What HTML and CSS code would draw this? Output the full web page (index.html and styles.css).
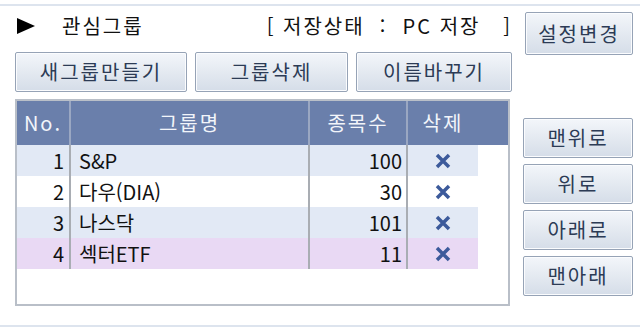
FILE: index.html
```html
<!DOCTYPE html>
<html lang="ko">

<head>
    <meta charset="UTF-8">
    <title>관심그룹</title>
    <link rel="stylesheet" href="styles.css">
</head>

<body>
    <div class="line"></div>
    <div class="panel">
        <div class="left">
            <div class="title-row">
                <svg class="arrow" width="18" height="16" viewBox="0 0 18 16">
                    <polygon points="0,0 18,8 0,16" fill="#000" />
                </svg>
                <span class="title">관심그룹</span>
                <span class="status">[ 저장상태  :  PC 저장   ]</span>
            </div>
            <div class="btn-row">
                <button class="btn w-new">새그룹만들기</button>
                <button class="btn w-del">그룹삭제</button>
                <button class="btn w-ren">이름바꾸기</button>
            </div>
            <div class="grid">
                <div class="row head">
                    <div class="cell c-no">No.</div>
                    <div class="cell c-name">그룹명</div>
                    <div class="cell c-cnt">종목수</div>
                    <div class="cell c-x">삭제</div>
                    <div class="cell c-fill"></div>
                </div>
                <div class="row blue">
                    <div class="cell c-no">1</div>
                    <div class="cell c-name">S&amp;P</div>
                    <div class="cell c-cnt">100</div>
                    <div class="cell c-x"><svg class="xicon" width="16" height="16" viewBox="0 0 16 16"><path d="M2 2 L14 14 M14 2 L2 14" /></svg></div>
                    <div class="cell c-fill"></div>
                </div>
                <div class="row">
                    <div class="cell c-no">2</div>
                    <div class="cell c-name">다우(DIA)</div>
                    <div class="cell c-cnt">30</div>
                    <div class="cell c-x"><svg class="xicon" width="16" height="16" viewBox="0 0 16 16"><path d="M2 2 L14 14 M14 2 L2 14" /></svg></div>
                    <div class="cell c-fill"></div>
                </div>
                <div class="row blue">
                    <div class="cell c-no">3</div>
                    <div class="cell c-name">나스닥</div>
                    <div class="cell c-cnt">101</div>
                    <div class="cell c-x"><svg class="xicon" width="16" height="16" viewBox="0 0 16 16"><path d="M2 2 L14 14 M14 2 L2 14" /></svg></div>
                    <div class="cell c-fill"></div>
                </div>
                <div class="row purple">
                    <div class="cell c-no">4</div>
                    <div class="cell c-name">섹터ETF</div>
                    <div class="cell c-cnt">11</div>
                    <div class="cell c-x"><svg class="xicon" width="16" height="16" viewBox="0 0 16 16"><path d="M2 2 L14 14 M14 2 L2 14" /></svg></div>
                    <div class="cell c-fill"></div>
                </div>
            </div>
        </div>
        <div class="right">
            <button class="btn b-set">설정변경</button>
            <div class="move">
                <button class="btn b-move">맨위로</button>
                <button class="btn b-move">위로</button>
                <button class="btn b-move">아래로</button>
                <button class="btn b-move">맨아래</button>
            </div>
        </div>
    </div>
    <div class="line"></div>
</body>

</html>
```

FILE: styles.css
```css
* {
    margin: 0;
    padding: 0;
    box-sizing: border-box;
}

body {
    width: 640px;
    height: 328px;
    background: #fff;
    font-family: "Noto Sans CJK KR", sans-serif;
    font-size: 20px;
    color: #111;
    overflow: hidden;
}

.line {
    height: 2px;
    margin-top: 4px;
    background: #dde4ee;
}

.panel {
    display: grid;
    grid-template-columns: 497px 110px;
    column-gap: 11px;
    padding: 6px 0 0 15px;
    height: 315px;
}

.left {
    display: flex;
    flex-direction: column;
}

.title-row {
    height: 28px;
    display: flex;
    align-items: center;
    margin-bottom: 12px;
}

.arrow {
    margin-left: 2px;
}

.title {
    margin-left: 27px;
    letter-spacing: 2px;
    line-height: 1;
}

.status {
    margin-left: auto;
    white-space: pre;
    letter-spacing: 2px;
    line-height: 1;
}

.btn-row {
    display: flex;
    gap: 8px;
    height: 40px;
}

.btn {
    font-family: "Noto Sans CJK KR", sans-serif;
    font-size: 20px;
    letter-spacing: 2px;
    color: #2c3b55;
    border: 1px solid #96a3b6;
    border-radius: 2px;
    background: linear-gradient(#f3f6fa, #d5dde8);
    box-shadow: inset 0 0 0 1px #fbfcfe;
    line-height: 1;
}

.w-new {
    width: 172px;
}

.w-del {
    width: 153px;
}

.w-ren {
    width: 156px;
}

.grid {
    margin-top: 7px;
    width: 495px;
    height: 207px;
    border: 2px solid #b9bfc8;
    background: #fff;
}

.row {
    display: grid;
    grid-template-columns: 54px 239px 98px 70px 30px;
    height: 31px;
}

.cell {
    display: flex;
    align-items: center;
    line-height: 1;
}

.row .c-no,
.row .c-name,
.row .c-cnt {
    border-right: 2px solid #a9adb3;
}

.c-no {
    justify-content: flex-end;
    padding-right: 5px;
}

.c-name {
    padding-left: 8px;
}

.c-cnt {
    justify-content: flex-end;
    padding-right: 4px;
}

.c-x {
    justify-content: center;
}

.blue .cell {
    background: #e2e9f5;
}

.purple .cell {
    background: #e9d9f4;
}

.row .c-fill {
    background: #fff;
}

.head {
    height: 44px;
}

.head .cell {
    background: #6a7fab;
    color: #f2f5fa;
    justify-content: center;
    padding: 0;
    letter-spacing: 2px;
}

.head .c-no,
.head .c-name,
.head .c-cnt {
    border-right-color: #9aa7c2;
}

.head .c-fill {
    background: #6a7fab;
}

.xicon path {
    stroke: #3c5a9b;
    stroke-width: 3.5;
    fill: none;
}

.right {
    display: flex;
    flex-direction: column;
}

.b-set {
    width: 108px;
    height: 43px;
    margin-left: 2px;
}

.move {
    margin-top: 63px;
    display: flex;
    flex-direction: column;
    gap: 6px;
}

.b-move {
    width: 110px;
    height: 40px;
}
```
